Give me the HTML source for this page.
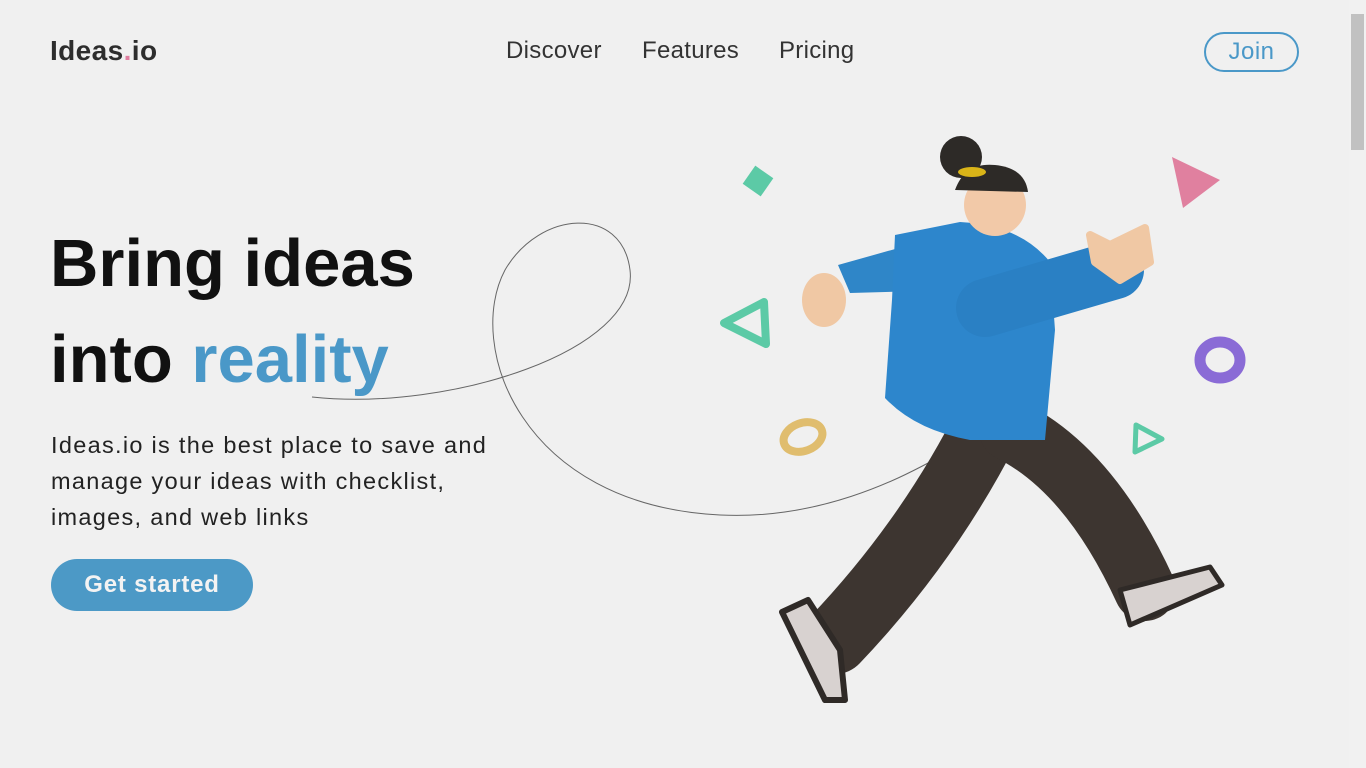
<!DOCTYPE html>
<html><head><meta charset="utf-8"><style>
*{margin:0;padding:0;box-sizing:border-box}
body{width:1366px;height:768px;overflow:hidden;background:#f0f0f0;font-family:"Liberation Sans",sans-serif;position:relative}
.abs{position:absolute}
.logo{left:50px;top:35px;font-size:28px;font-weight:bold;color:#2d2d2d;letter-spacing:0.4px}
.logo span{color:#e07ea0}
.nav{top:37px;font-size:24px;color:#333;letter-spacing:0.3px}
.join{left:1204px;top:32px;width:95px;height:40px;border:2px solid #4a98c8;border-radius:20px;color:#4a98c8;font-size:24px;text-align:center;line-height:36px;letter-spacing:0.5px}
h1{left:50px;top:216px;font-size:67px;font-weight:bold;color:#111;line-height:96px;letter-spacing:0px}
h1 span{color:#4a98c8}
p{left:51px;top:427px;font-size:23.5px;color:#222;line-height:36px;width:480px;letter-spacing:1.3px}
.btn{left:51px;top:559px;width:202px;height:52px;border-radius:26px;background:#4c99c6;color:#f3f3f3;font-weight:bold;font-size:24px;text-align:center;line-height:52px;letter-spacing:0.8px}
.sb{left:1349px;top:0;width:17px;height:768px;background:#f1f1f1}
.th{left:1351px;top:14px;width:13px;height:136px;background:#c1c1c1}
</style></head><body>
<div class="abs logo">Ideas<span>.</span>io</div>
<div class="abs nav" style="left:506px">Discover</div>
<div class="abs nav" style="left:642px">Features</div>
<div class="abs nav" style="left:779px">Pricing</div>
<div class="abs join">Join</div>
<svg class="abs" style="left:0;top:0" width="1349" height="768">
<path d="M312 397 C450 412 640 350 630 270 C622 205 540 210 505 270 C465 345 520 505 720 515 C820 520 900 478 930 462" fill="none" stroke="#666" stroke-width="1"/>
<rect x="747" y="170" width="22" height="22" fill="#5ccaa6" transform="rotate(35 758 181)"/>
<polygon points="1172,157 1220,180 1183,208" fill="#e0809f"/>
<polygon points="724,323 764,302 766,344" fill="none" stroke="#5ccaa6" stroke-width="8" stroke-linejoin="round"/>
<polygon points="1136,425 1162,439 1135,452" fill="none" stroke="#5ccaa6" stroke-width="5" stroke-linejoin="round"/>
<ellipse cx="1220" cy="360" rx="20" ry="18" fill="none" stroke="#8a6bd6" stroke-width="11"/>
<ellipse cx="803" cy="437" rx="20" ry="14" fill="none" stroke="#e0bd6e" stroke-width="8" transform="rotate(-20 803 437)"/>
<path d="M990 420 Q930 540 835 640" fill="none" stroke="#3d3530" stroke-width="68" stroke-linecap="round"/>
<path d="M1010 430 Q1090 470 1145 590" fill="none" stroke="#3d3530" stroke-width="62" stroke-linecap="round"/>
<path d="M782 612 L808 600 L840 650 L845 700 L825 700 Z" fill="#d8d2d0" stroke="#2f2a27" stroke-width="6" stroke-linejoin="round"/>
<path d="M1120 590 L1210 567 L1222 585 L1130 625 Z" fill="#d8d2d0" stroke="#2f2a27" stroke-width="5" stroke-linejoin="round"/>
<path d="M838 265 L945 235 L960 290 L850 293 Z" fill="#2f86c8"/>
<path d="M895 235 L960 222 Q1020 225 1050 262 L1055 330 L1045 440 L970 440 Q915 430 885 398 L892 300 Z" fill="#2d86cc"/>
<path d="M985 308 L1115 270" fill="none" stroke="#2a80c4" stroke-width="58" stroke-linecap="round"/>
<ellipse cx="824" cy="300" rx="22" ry="27" fill="#f0c8a4"/>
<path d="M1095 262 L1090 235 L1110 245 L1145 228 L1150 262 L1120 280 Z" fill="#f0c8a4" stroke="#f0c8a4" stroke-width="8" stroke-linejoin="round"/>
<circle cx="995" cy="205" r="31" fill="#f2c9a8"/>
<circle cx="961" cy="157" r="21" fill="#2d2a27"/>
<path d="M955 190 Q965 162 995 165 Q1025 168 1028 192 Z" fill="#2d2a27"/>
<ellipse cx="972" cy="172" rx="14" ry="5" fill="#d9b418"/>
</svg>
<h1 class="abs">Bring ideas<br>into <span>reality</span></h1>
<p class="abs">Ideas.io is the best place to save and manage your ideas with checklist, images, and web links</p>
<div class="abs btn">Get started</div>
<div class="abs sb"></div><div class="abs th"></div>
</body></html>
